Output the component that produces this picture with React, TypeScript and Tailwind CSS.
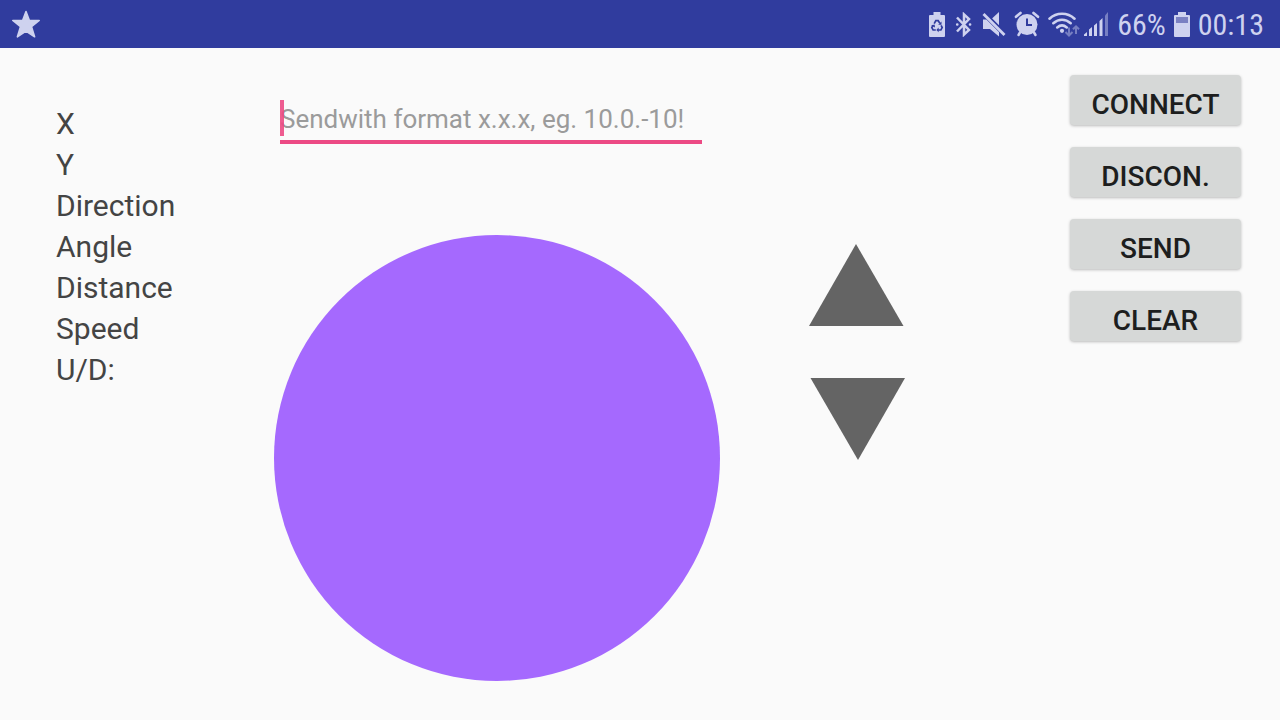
import { useState } from "react";

const labels = ["X", "Y", "Direction", "Angle", "Distance", "Speed", "U/D:"];
const actions = ["CONNECT", "DISCON.", "SEND", "CLEAR"];

function StarIcon() {
  return (
    <svg viewBox="0 0 30 28" className="h-7 w-[30px]" fill="currentColor" stroke="currentColor" strokeWidth="1.6" strokeLinejoin="round" aria-hidden="true">
      <path d="M15 1.6 18.3 10.400 28.200 10.500 20.500 16.700 23.600 26.800 15 21.200 6.400 26.800 9.500 16.700 1.800 10.500 11.700 10.400Z" />
    </svg>
  );
}

function RecycleBatteryIcon() {
  return (
    <svg viewBox="0 0 16 25" className="h-[25px] w-4" aria-hidden="true">
      <path d="M4.5 0h7v3H15a1 1 0 0 1 1 1v20a1 1 0 0 1-1 1H1a1 1 0 0 1-1-1V4a1 1 0 0 1 1-1h3.500z" fill="currentColor" />
      <g fill="none" stroke="#303c9e" strokeWidth="1.7">
        <path d="M5.200 11.600 6.800 8.700H9.200L10.900 11.400" />
        <path d="M12.100 13.300 13.200 15.600 11.900 18H9" />
        <path d="M6.800 18H4.100L2.800 15.600 4.200 13.200" />
      </g>
      <g fill="#303c9e">
        <path d="M12.500 9.600v3.200H9.200z" />
        <path d="M9.600 15.600v4.600L7.400 17.900z" />
        <path d="M2.100 13.500 5.600 12.400 6 15.500z" />
      </g>
    </svg>
  );
}

function BluetoothIcon() {
  return (
    <svg viewBox="0 0 17 25" className="h-[25px] w-[17px]" fill="none" stroke="currentColor" strokeWidth="2.500" aria-hidden="true">
      <path d="M2 5.500 14 18 9 22.600V2.400L14 7 2 19.500" />
      <path d="M2.200 12.500h.1M15 12.500h.1" strokeLinecap="round" strokeWidth="2.600" />
    </svg>
  );
}

function MuteIcon() {
  return (
    <svg viewBox="0 0 24 25" className="h-[25px] w-6" fill="currentColor" aria-hidden="true">
      <path d="M17 0V13.500L10 6.500Z" />
      <path d="M1 7.500H4.500L17 20V24.500L8 17H1Z" />
      <path d="M2 1.500 23 22.500" stroke="#303c9e" strokeWidth="4.400" />
      <path d="M1.500 2 22.500 23" stroke="currentColor" strokeWidth="2.800" />
    </svg>
  );
}

function AlarmIcon() {
  return (
    <svg viewBox="0 0 26 26" className="size-[26px]" fill="none" stroke="currentColor" aria-hidden="true">
      <circle cx="13" cy="13.500" r="10.500" fill="currentColor" stroke="none" />
      <path d="M2 5.800 6.500 1.900M24 5.800 19.500 1.900" strokeWidth="2.600" strokeLinecap="round" />
      <path d="M6 21.500 4.500 24M20 21.500 21.500 24" strokeWidth="2.500" strokeLinecap="round" />
      <path d="M13 7.500V14H18" stroke="#303c9e" strokeWidth="2" />
    </svg>
  );
}

function WifiIcon() {
  return (
    <svg viewBox="0 0 32 25" className="h-[25px] w-8" fill="none" stroke="currentColor" aria-hidden="true">
      <g strokeWidth="2.600" strokeLinecap="round">
        <path d="M1.500 6.700C8.500 0 19.500 0 26.500 6.700" />
        <path d="M5.300 11.200C10.500 6.500 17.500 6.500 22.700 11.200" />
        <path d="M9.200 15.400C12.200 12.800 15.800 12.800 18.800 15.400" />
      </g>
      <circle cx="14" cy="18.800" r="2.100" fill="currentColor" stroke="none" />
      <g strokeWidth="2" opacity="0.450">
        <path d="M21 15.500v8M17.500 20l3.500 3.500L24.500 20" />
        <path d="M28 22v-8M25 17.300l3-3 3 3" />
      </g>
    </svg>
  );
}

function SignalIcon() {
  return (
    <svg viewBox="0 0 25 25" className="size-[25px]" fill="currentColor" aria-hidden="true">
      <path d="M0 24v-1.500L3 20v4z" />
      <path d="M5 17.500 8 15v9H5zM10 13.500 13 11v13h-3zM15.500 9 18.500 6v18h-3z" />
      <path d="M21 3.500 24 0v24h-3z" opacity="0.450" />
    </svg>
  );
}

function BatteryIcon() {
  return (
    <svg viewBox="0 0 16 25" className="h-[25px] w-4" fill="currentColor" aria-hidden="true">
      <path d="M4 0h8v3h3a1 1 0 0 1 1 1v20a1 1 0 0 1-1 1H1a1 1 0 0 1-1-1V4a1 1 0 0 1 1-1h3z" />
      <path d="M2 5h12v6H2z" fill="#7a80c2" />
    </svg>
  );
}

export default function App() {
  const [message, setMessage] = useState("");

  return (
    <div className="flex min-h-screen flex-col bg-[#fafafa] font-['Roboto',sans-serif]">
      <header className="flex h-12 items-center justify-between bg-[#303c9e] pr-4 pl-[11px] text-[#ced2ef]">
        <StarIcon />
        <div className="flex items-center">
          <div className="flex items-center gap-[10px]">
            <RecycleBatteryIcon />
            <BluetoothIcon />
            <MuteIcon />
          </div>
          <div className="ml-2 flex items-center gap-2">
            <AlarmIcon />
            <WifiIcon />
          </div>
          <div className="ml-1">
            <SignalIcon />
          </div>
          <div className="ml-2 flex items-center gap-2 font-['Roboto_Condensed','Roboto',sans-serif] text-[30px] leading-8">
            <span className="pt-px">66%</span>
            <BatteryIcon />
            <time className="pt-px">00:13</time>
          </div>
        </div>
      </header>

      <main className="flex flex-1 items-start pr-[39px] pl-14">
        <ul className="w-[218px] pt-[55px] text-[30px] leading-[41px] text-[#444444]">
          {labels.map((label) => (
            <li key={label}>{label}</li>
          ))}
        </ul>

        <section className="flex w-[446px] flex-col pt-[52px]">
          <div className="relative mr-[18px] ml-1.5">
            <input
              type="text"
              aria-label="Message"
              value={message}
              onChange={(event) => setMessage(event.target.value)}
              placeholder="Sendwith format x.x.x, eg. 10.0.-10!"
              className="block h-11 w-full border-b-4 border-[#ec4a84] bg-transparent pb-0.5 text-[26px] text-[#444444] caret-[#ec4a84] outline-none placeholder:text-[#9b9b9b]"
            />
            <span className="pointer-events-none absolute top-0 left-0 h-9 w-1 bg-[#ec4a84]/90" />
          </div>
          <button type="button" aria-label="Joystick" className="mt-[91px] aspect-square w-full rounded-full bg-[#a569fe]" />
        </section>

        <div className="mt-[196px] ml-[89px] flex flex-col gap-[52px]">
          <button type="button" aria-label="Up">
            <svg viewBox="0 0 96 82" className="h-[82px] w-24" fill="#646464">
              <path d="M47 0 94.500 82H0Z" />
            </svg>
          </button>
          <button type="button" aria-label="Down">
            <svg viewBox="0 0 96 82" className="h-[82px] w-24" fill="#646464">
              <path d="M1.500 0H96L49 82Z" />
            </svg>
          </button>
        </div>

        <div className="mt-[27px] ml-auto flex w-[171px] flex-col gap-[22px]">
          {actions.map((action) => (
            <button
              key={action}
              type="button"
              className="h-[50px] rounded-[4px] bg-[#d6d8d7] pt-2.5 text-[28px] leading-10 font-medium text-[#1d1e1e] shadow-[0_1px_3px_rgba(0,0,0,0.25)]"
            >
              {action}
            </button>
          ))}
        </div>
      </main>
    </div>
  );
}
